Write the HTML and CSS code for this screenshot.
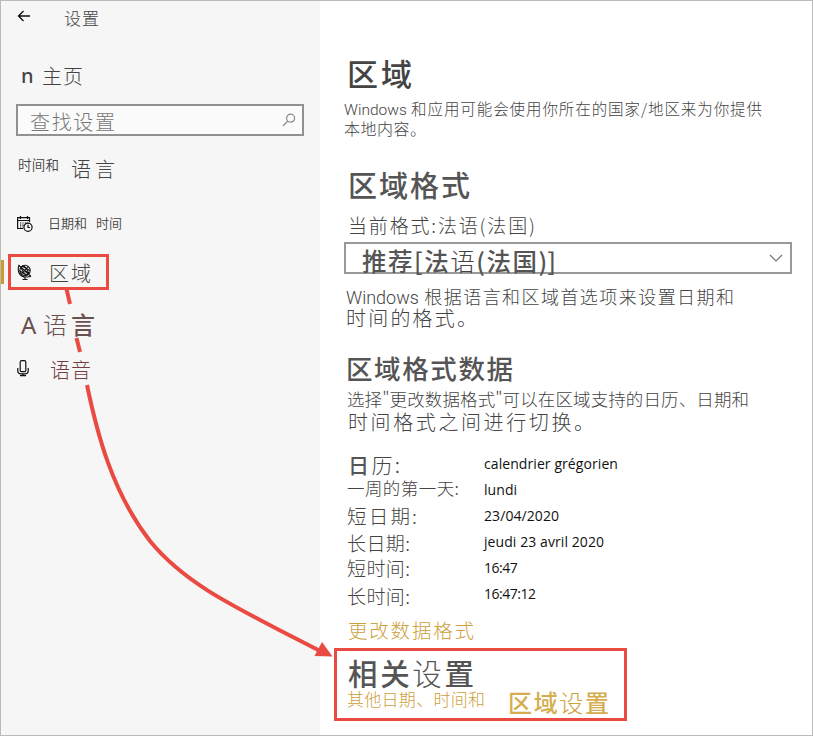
FILE: index.html
```html
<!DOCTYPE html>
<html lang="zh-CN">
<head>
<meta charset="utf-8">
<title>设置</title>
<link rel="stylesheet" href="styles.css">
</head>
<body>
<div class="window">
  <aside class="sidebar">
    <header class="row titlebar">
      <svg class="back" width="14" height="12" viewBox="0 0 14 12"><path d="M13 6H1.5M6.5 1L1.5 6L6.5 11"/></svg>
      <span class="t app-title">设置</span>
    </header>
    <div class="row home"><span class="home-icon">n</span><span class="t home-label">主页</span></div>
    <div class="search">
      <span class="t search-text">查找设置</span>
      <svg class="glass" width="14" height="14" viewBox="0 0 14 14"><circle cx="8.6" cy="5.2" r="4"/><path d="M5.7 8.1L1 13"/></svg>
    </div>
    <div class="row group"><span class="t group-a">时间和</span><span class="t group-b">语言</span></div>
    <nav>
      <a class="row item-date">
        <svg class="ico" width="16" height="16" viewBox="0 0 16 16">
          <path d="M6 12.500H.6V1.600H12.500V6M.6 4.500H12.500M3.500 0V3M10.500 0V3" />
          <path d="M3 7H11M3 9.200H7M3 11H6" stroke-dasharray="1.2 1.2"/>
          <circle cx="11" cy="11.300" r="4.100"/><path d="M11 8.700V11.500H13"/>
        </svg>
        <span class="t date-a">日期和</span><span class="t date-b">时间</span>
      </a>
      <a class="row item-region">
        <svg class="ico globe" width="16" height="17" viewBox="0 0 16 17">
          <circle cx="8" cy="6.500" r="5.200"/><ellipse cx="8" cy="6.500" rx="2.200" ry="5" transform="rotate(-35 8 6.500)"/>
          <path d="M3.500 4L12 9M5 2L12.800 6.500M3 7L9.500 11.200M2 1C-.3 8 3 13 9 13C11 13 12.600 12.500 14 12.500M1.500 1L14 12.500M8 13V16M5.500 15.500H10.500M4.500 10L11 2.700"/>
        </svg>
        <span class="t region-label">区域</span>
      </a>
      <a class="row item-lang"><span class="letter">A</span><span class="t lang-label">语<b>言</b></span></a>
      <a class="row item-speech">
        <svg class="ico mic" width="12" height="17" viewBox="0 0 12 17"><rect x="3.200" y=".7" width="5.600" height="11" rx="1.500"/><path d="M.8 8V11C.8 13 2 13.800 4 13.800H8C10 13.800 11.200 13 11.200 11V8M6 14V16M3 15.700H9"/></svg>
        <span class="t speech-label">语音</span>
      </a>
    </nav>
  </aside>
  <main>
    <h1 class="t">区域</h1>
    <p class="t intro-a"><span class="latin">Windows</span> 和应用可能会使用你所在的国家/地区来为你提供</p>
    <p class="t intro-b">本地内容。</p>
    <h2 class="t format-title">区域格式</h2>
    <p class="t current">当前格式:法语(法国)</p>
    <div class="select">
      <span class="t select-text"><b>推荐[法</b>语<b>(法国)]</b></span>
      <svg class="chevron" width="14" height="8" viewBox="0 0 14 8"><path d="M1 1L7 7L13 1"/></svg>
    </div>
    <p class="t note-a"><span class="latin">Windows</span> 根据语言和区域首选项来设置日期和</p>
    <p class="t note-b">时间的格式。</p>
    <h2 class="t data-title">区域格式数据</h2>
    <p class="t data-a">选择"更改数据格式"可以在区域支持的日历、日期和</p>
    <p class="t data-b">时间格式之间进行切换。</p>
    <div class="data">
      <div class="labels">
        <span class="t l1"><b>日</b>历:</span>
        <span class="t l2">一周的第一天:</span>
        <span class="t l3">短日期:</span>
        <span class="t l4">长日期:</span>
        <span class="t l5">短时间:</span>
        <span class="t l6">长时间:</span>
      </div>
      <div class="values">
        <span>calendrier grégorien</span><span>lundi</span><span>23/04/2020</span><span>jeudi 23 avril 2020</span><span class="time">16:47</span><span class="time">16:47:12</span>
      </div>
    </div>
    <a class="t change">更改数据格式</a>
    <section class="related">
      <h2 class="t related-title">相关<i>设</i>置</h2>
      <div class="row links"><a class="t link-a">其他日期、时间和</a><a class="t link-b"><b>区域</b>设<b>置</b></a></div>
    </section>
  </main>
  <svg class="arrow" width="813" height="736" viewBox="0 0 813 736">
    <path class="shaft" d="M66.500 289L70 304M76.500 338L80 352M87 385C97 433 112 492 150 541C186 585 235 607 320 651"/>
    <path class="head" d="M322 642L332.500 656.500L314.500 656Z"/>
  </svg>
</div>
</body>
</html>
```
FILE: styles.css
```css
* { box-sizing: border-box; }
body { margin: 0; font-family: "Noto Sans CJK SC", sans-serif; font-weight: 300; color: #444; }
h1, h2, p { margin: 0; }
b, h1, h2 { font-weight: 500; }
b, h2 { color: #555; }
i { font-style: normal; font-weight: 300; }
svg { fill: none; flex: none; }
.window { position: relative; display: flex; width: 813px; height: 736px; border: 1px solid #bbb; background: #fff; overflow: hidden; }
.t { display: block; height: 20px; line-height: 20px; white-space: nowrap; text-align: justify; text-align-last: justify; }
.row { display: flex; align-items: flex-start; }
.latin { font-family: Roboto, sans-serif; font-weight: 300; }

.sidebar { width: 319px; flex: none; background: #f6f6f6; }
.titlebar { padding: 7px 0 0 16px; }
.back { margin-top: 2px; stroke: #111; stroke-width: 1.4; }
.app-title { width: 35px; margin-left: 33px; font-size: 17px; }
.home { margin-top: 38px; padding-left: 20px; }
.home-icon { width: 21px; font: 500 20px/20px "Noto Sans", sans-serif; }
.home-label { width: 41px; font-size: 20px; }
.search { display: flex; justify-content: space-between; width: 288px; height: 32px; margin: 18px 0 0 15px; border: 2px solid #919191; background: #fbfbfb; padding: 6px 6px 0 12px; }
.search-text { width: 85px; font-size: 20px; color: #777; }
.glass { margin-top: 1px; stroke: #888; stroke-width: 1.2; }
.group { margin-top: 18px; padding-left: 17px; }
.group-a { width: 41px; font-size: 13.500px; font-weight: 350; }
.group-b { width: 44px; margin: 5px 0 0 12px; font-size: 20px; }
.ico { stroke: #111; stroke-width: 1.2; }
.item-date { margin-top: 34px; padding-left: 16px; }
.item-date .ico { margin-top: 3px; }
.date-a { width: 39px; margin-left: 15px; font-size: 13px; font-weight: 350; }
.date-b { width: 26px; margin-left: 9px; font-size: 13px; font-weight: 350; }
.item-region { width: 101px; height: 36px; margin: 21px 0 0 7px; padding: 6px 0 0 5px; border: 3px solid #e94b43; }
.item-region::before { content: ""; width: 3px; height: 24px; margin: -3px 0 0 -15px; background: #ca9c2e; }
.globe { margin: 1px 0 0 13px; stroke-width: 1.1; }
.region-label { width: 42px; margin-left: 16px; font-size: 20px; }
.item-lang { margin-top: 24px; padding-left: 20px; color: #6b5050; }
.item-lang b { color: inherit; }
.letter { width: 22px; font: 400 24px/22px "Noto Sans", sans-serif; }
.lang-label { width: 52px; font-size: 24px; }
.item-speech { margin-top: 24px; padding-left: 16px; color: #703f3f; }
.speech-label { width: 41px; margin-left: 21px; font-size: 20px; }

main { flex: 1; padding: 62px 0 0 24px; }
h1 { width: 65px; margin-left: 3px; font-size: 31px; color: #444; }
.intro-a { width: 418px; margin-top: 15px; font-size: 15.500px; }
.intro-b { width: 82px; font-size: 16px; }
.format-title { width: 122px; margin: 36px 0 0 4px; font-size: 29px; }
.current { width: 187px; margin: 21px 0 0 4px; font-size: 19px; }
.select { display: flex; justify-content: space-between; width: 448px; height: 32px; margin-top: 7px; border: 2px solid #999; padding: 7px 7px 0 16px; }
.select-text { width: 194px; font-size: 24.500px; }
.chevron { margin-top: 3px; stroke: #777; stroke-width: 1.2; }
.note-a { width: 388px; margin: 12px 0 0 2px; font-size: 18px; }
.note-b { width: 131px; margin: 2px 0 0 2px; font-size: 20px; }
.data-title { width: 167px; margin: 30px 0 0 2px; font-size: 26.500px; }
.data-a { width: 402px; margin: 11px 0 0 3px; font-size: 17.500px; }
.data-b { width: 246px; margin: 3px 0 0 4px; font-size: 20px; }
.data { display: flex; height: 165px; margin-top: 19px; }
.labels { width: 140px; padding: 3px 0 0 3px; }
.l1 { width: 53px; font-size: 21px; padding-left: 1px; }
.l2 { width: 112px; margin-top: 4px; font-size: 17.500px; }
.l3 { width: 70px; margin-top: 8px; font-size: 19.500px; }
.l4 { width: 63px; margin-top: 7px; font-size: 19px; }
.l5 { width: 63px; margin-top: 5px; font-size: 19px; }
.l6 { width: 63px; margin-top: 8px; font-size: 19px; }
.values { display: flex; flex-direction: column; font: 400 14px/26px "Open Sans", sans-serif; letter-spacing: .08px; color: #111; white-space: nowrap; }
.time { letter-spacing: -.5px; }
.change { width: 126px; margin: 4px 0 0 4px; font-size: 19.500px; color: #cda13b; }
.related { width: 293px; height: 73px; margin: 8px 0 0 -10px; padding: 11px 0 0 10px; border: 3px solid #e94b43; }
.related-title { width: 126px; margin-left: 1px; font-size: 29.500px; }
.links { margin-top: 7px; color: #cda13b; }
.links b { color: #d5ad4f; }
.link-a { width: 138px; font-size: 17px; }
.link-b { width: 101px; margin: 3px 0 0 23px; font-size: 24px; }
.arrow { position: absolute; left: -1px; top: -1px; }
.shaft { stroke: #e94b43; stroke-width: 4; }
.head { fill: #e94b43; }
```
